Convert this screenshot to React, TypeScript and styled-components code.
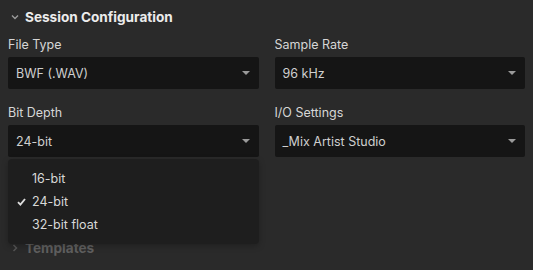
import React from "react";
import styled, { createGlobalStyle } from "styled-components";

const Global = createGlobalStyle`
  html, body {
    margin: 0;
    padding: 0;
    background: #2a2a2a;
  }
  body {
    font-family: Inter, "Noto Sans", "Liberation Sans", sans-serif;
    -webkit-font-smoothing: antialiased;
  }
`;

const Panel = styled.div`
  width: 533px;
  height: 270px;
  background: #2a2a2a;
  overflow: hidden;
  position: relative;
`;

const SectionHeader = styled.div<{ $dim?: boolean }>`
  height: 34px;
  display: flex;
  align-items: center;
  gap: 6px;
  padding-left: 11px;
  font-size: 13.6px;
  font-weight: 700;
  color: ${(p) => (p.$dim ? "#5f5f5f" : "#ececec")};
`;

const Grid = styled.div`
  display: grid;
  grid-template-columns: 1fr 1fr;
  column-gap: 16px;
  row-gap: 16px;
  padding: 3px 8px 0 8px;
`;

const Field = styled.div`
  position: relative;
  display: flex;
  flex-direction: column;
`;

const Label = styled.div`
  font-size: 12.5px;
  line-height: 16px;
  color: #d6d6d6;
  margin-bottom: 4px;
`;

const Select = styled.div`
  height: 32px;
  background: #151515;
  border-radius: 2px;
  display: flex;
  align-items: center;
  justify-content: space-between;
  padding: 0 9px 0 8px;
  font-size: 12.5px;
  color: #cfcfcf;
`;

const Caret = styled.span`
  width: 0;
  height: 0;
  border-left: 4px solid transparent;
  border-right: 4px solid transparent;
  border-top: 4px solid #9a9a9a;
`;

const Menu = styled.div`
  position: absolute;
  left: 0;
  right: 0;
  top: calc(100% + 2px);
  background: #1e1e1e;
  border-radius: 4px;
  padding: 8px 0;
  z-index: 2;
  box-shadow: 0 2px 6px rgba(0, 0, 0, 0.25);
`;

const MenuItem = styled.div`
  height: 23px;
  display: flex;
  align-items: center;
  font-size: 12.5px;
  color: #d8d8d8;
`;

const CheckSlot = styled.span`
  width: 24px;
  display: flex;
  padding-left: 9px;
  box-sizing: border-box;
`;

const Spacer = styled.div`
  height: 74px;
`;

const ChevronDown = () => (
  <svg width="8" height="6" viewBox="0 0 8 6">
    <path d="M1 1.5 L4 4.5 L7 1.5" fill="none" stroke="#9a9a9a" strokeWidth="1.4" />
  </svg>
);

const ChevronRight = () => (
  <svg width="8" height="8" viewBox="0 0 8 8">
    <path d="M2.5 1 L5.5 4 L2.5 7" fill="none" stroke="#555" strokeWidth="1.5" />
  </svg>
);

const Check = () => (
  <svg width="9" height="8" viewBox="0 0 9 8">
    <path d="M1 4.2 L3.4 6.6 L8 1" fill="none" stroke="#dcdcdc" strokeWidth="1.9" />
  </svg>
);

const bitDepths = ["16-bit", "24-bit", "32-bit float"];

export default function App() {
  return (
    <Panel>
      <Global />
      <SectionHeader>
        <ChevronDown />
        Session Configuration
      </SectionHeader>
      <Grid>
        <Field>
          <Label>File Type</Label>
          <Select>
            BWF (.WAV)
            <Caret />
          </Select>
        </Field>
        <Field>
          <Label>Sample Rate</Label>
          <Select>
            96 kHz
            <Caret />
          </Select>
        </Field>
        <Field>
          <Label>Bit Depth</Label>
          <Select>
            24-bit
            <Caret />
          </Select>
          <Menu>
            {bitDepths.map((d) => (
              <MenuItem key={d}>
                <CheckSlot>{d === "24-bit" && <Check />}</CheckSlot>
                {d}
              </MenuItem>
            ))}
          </Menu>
        </Field>
        <Field>
          <Label>I/O Settings</Label>
          <Select>
            _Mix Artist Studio
            <Caret />
          </Select>
        </Field>
      </Grid>
      <Spacer />
      <SectionHeader $dim>
        <ChevronRight />
        Templates
      </SectionHeader>
    </Panel>
  );
}
